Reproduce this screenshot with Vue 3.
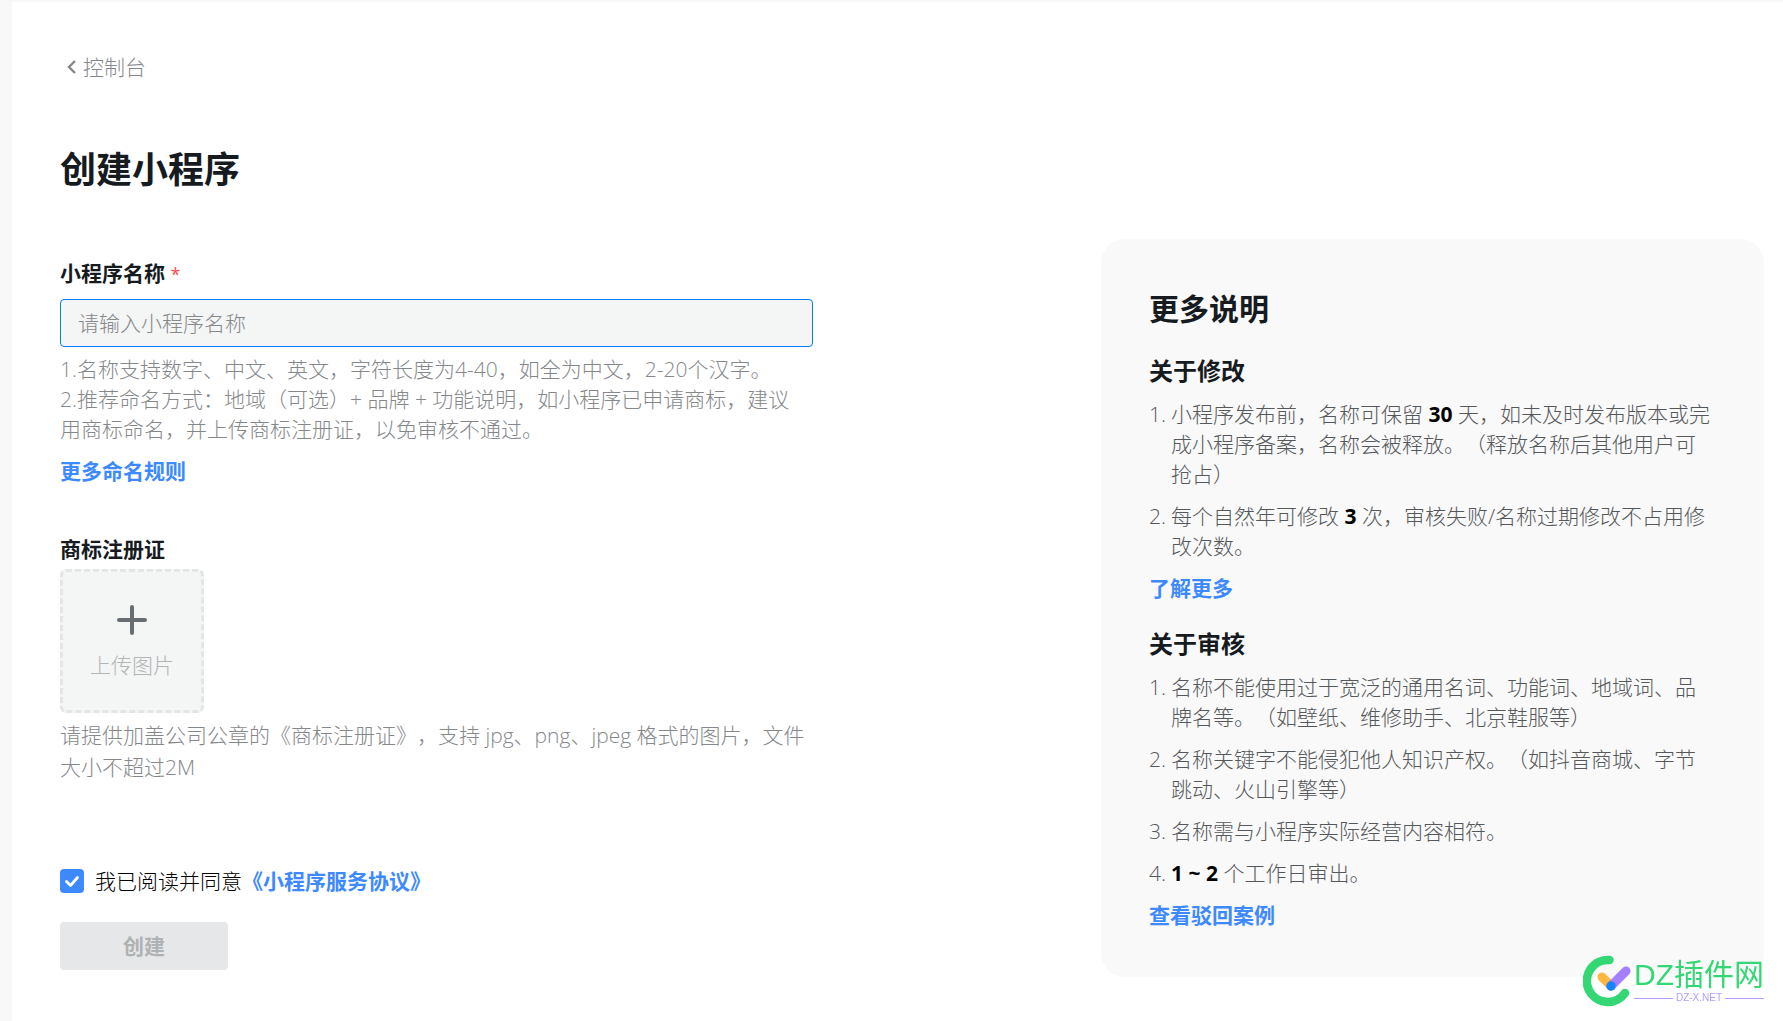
<script setup>
import { ref } from 'vue'

const name = ref('')
const agreed = ref(true)
</script>

<template>
  <div class="shell">
    <main class="page">
      <a class="back" href="#">
        <svg class="back-icon" viewBox="0 0 12 16" aria-hidden="true">
          <path d="M9 2 3 8l6 6" fill="none" stroke="currentColor" stroke-width="2.4" />
        </svg>
        <span>控制台</span>
      </a>
      <h1>创建小程序</h1>

      <div class="columns">
        <form class="form" @submit.prevent>
          <label class="label" for="app-name">小程序名称 <span class="required">*</span></label>
          <input id="app-name" v-model="name" class="text-input" type="text" placeholder="请输入小程序名称" />
          <p class="hint name-hint">
            1.名称支持数字、中文、英文，字符长度为4-40，如全为中文，2-20个汉字。<br />
            2.推荐命名方式：地域（可选）+ 品牌 + 功能说明，如小程序已申请商标，建议用商标命名，并上传商标注册证，以免审核不通过。
          </p>
          <a class="link" href="#">更多命名规则</a>

          <span id="cert-label" class="label cert-label">商标注册证</span>
          <button class="upload" type="button" aria-describedby="cert-label">
            <svg class="plus" viewBox="0 0 30 30" aria-hidden="true">
              <path d="M15 2v26M2 15h26" fill="none" stroke="currentColor" stroke-width="4" stroke-linecap="round" />
            </svg>
            <span>上传图片</span>
          </button>
          <p class="hint cert-hint">请提供加盖公司公章的《商标注册证》，支持 jpg、png、jpeg 格式的图片，文件大小不超过2M</p>

          <div class="agree">
            <input id="agree" v-model="agreed" class="check" type="checkbox" />
            <label for="agree">我已阅读并同意</label>
            <a class="link" href="#">《小程序服务协议》</a>
          </div>
          <button class="submit" type="submit" disabled>创建</button>
        </form>

        <aside class="card">
          <h2>更多说明</h2>
          <h3>关于修改</h3>
          <ol>
            <li><span class="num">1.</span><span>小程序发布前，名称可保留 <b>30</b> 天，如未及时发布版本或完成小程序备案，名称会被释放。（释放名称后其他用户可抢占）</span></li>
            <li><span class="num">2.</span><span>每个自然年可修改 <b>3</b> 次，审核失败/名称过期修改不占用修改次数。</span></li>
          </ol>
          <a class="link" href="#">了解更多</a>
          <h3>关于审核</h3>
          <ol>
            <li><span class="num">1.</span><span>名称不能使用过于宽泛的通用名词、功能词、地域词、品牌名等。（如壁纸、维修助手、北京鞋服等）</span></li>
            <li><span class="num">2.</span><span>名称关键字不能侵犯他人知识产权。（如抖音商城、字节跳动、火山引擎等）</span></li>
            <li><span class="num">3.</span><span>名称需与小程序实际经营内容相符。</span></li>
            <li><span class="num">4.</span><span><b>1 ~ 2</b> 个工作日审出。</span></li>
          </ol>
          <a class="link" href="#">查看驳回案例</a>
        </aside>
      </div>
    </main>

    <div class="watermark">
      <svg class="mark" viewBox="0 0 48 52" aria-hidden="true">
        <path d="M26.5 5A21 21 0 1 0 42 38" fill="none" stroke="#33d774" stroke-width="8.5" stroke-linecap="round" />
        <path d="M19 22l9 9" stroke="#ffb83d" stroke-width="9" stroke-linecap="round" />
        <path d="M43 16 28 31" stroke="#a480ff" stroke-width="9" stroke-linecap="round" />
        <circle cx="28" cy="31" r="4.7" fill="#1485ff" />
      </svg>
      <div class="brand">
        <span class="brand-name">DZ插件网</span>
        <span class="brand-site">DZ-X.NET</span>
      </div>
    </div>
  </div>
</template>

<style>
body {
  margin: 0;
  background: #f8f8f8;
}
</style>

<style scoped>
.shell {
  box-sizing: border-box;
  min-height: 100vh;
  padding: 2px 0 0 12px;
  display: flex;
  font-family: "Open Sans", "Noto Sans CJK SC", sans-serif;
  font-size: 21px;
  font-weight: 300;
  line-height: 30px;
  text-spacing-trim: space-all;
  color: #161b1f;
}

.page {
  flex: 1;
  min-width: 0;
  padding: 50px 19px 44px 48px;
  background: #fff;
}

a {
  text-decoration: none;
}

.back {
  display: inline-flex;
  align-items: center;
  gap: 5px;
  padding-left: 6px;
  color: #85888b;
}

.back-icon {
  width: 12px;
  height: 16px;
}

h1,
h2,
h3,
p,
ol {
  margin: 0;
  padding: 0;
}

h1 {
  margin-top: 60px;
  font-size: 36px;
  line-height: 56px;
}

.columns {
  display: flex;
  justify-content: space-between;
  gap: 48px;
  align-items: flex-start;
  margin-top: 41px;
}

.form {
  flex: 0 1 753px;
  min-width: 0;
  display: flex;
  flex-direction: column;
  align-items: flex-start;
  padding-top: 19px;
}

.label {
  font-weight: 700;
}

.required {
  color: #ff4d4f;
  font-size: 18px;
  font-weight: 400;
  line-height: 18px;
}

.text-input {
  box-sizing: border-box;
  width: 100%;
  height: 48px;
  margin: 11px 0 7px;
  padding: 0 17px;
  border: 1px solid #007bff;
  border-radius: 4px;
  background: #f4f5f5;
  outline: none;
  font: inherit;
  color: #161b1f;
}

.text-input::placeholder {
  color: #85888b;
  opacity: 1;
}

.hint {
  color: #85888b;
}

.name-hint {
  padding-right: 12px;
}

.link {
  color: #3d89ff;
  font-weight: 700;
}

.form > .link {
  margin-top: 12px;
}

.cert-label {
  margin-top: 48px;
}

.upload {
  box-sizing: border-box;
  width: 144px;
  height: 144px;
  margin: 5px 0 6px;
  padding: 2px 0 0;
  display: flex;
  flex-direction: column;
  align-items: center;
  justify-content: center;
  gap: 15px;
  border: 3px dashed #e4e5e5;
  border-radius: 6px;
  background: #f4f5f5;
  font: inherit;
  color: #b2b4b6;
}

.plus {
  width: 30px;
  height: 30px;
  color: #686d72;
}

.cert-hint {
  line-height: 32px;
}

.agree {
  display: flex;
  align-items: center;
  margin-top: 83px;
  color: #000;
}

.check {
  appearance: none;
  width: 24px;
  height: 24px;
  margin: 0 11px 0 0;
  border-radius: 4px;
  background: #3d89ff url("data:image/svg+xml,%3Csvg xmlns='http://www.w3.org/2000/svg' viewBox='0 0 24 24'%3E%3Cpath d='M6.5 12.5l4 4 7-8' fill='none' stroke='white' stroke-width='2.8' stroke-linecap='round' stroke-linejoin='round'/%3E%3C/svg%3E") center / 24px;
}

.submit {
  width: 168px;
  height: 48px;
  margin-top: 26px;
  padding: 0;
  border: 0;
  border-radius: 4px;
  background: #e6e7e9;
  font: inherit;
  font-weight: 700;
  color: #afb2b3;
}

.card {
  box-sizing: border-box;
  flex: 0 1 663px;
  min-width: 0;
  padding: 48px 48px 47px;
  border-radius: 24px;
  background: #f9f9f9;
}

h2 {
  font-size: 30px;
  line-height: 43px;
}

h3 {
  margin: 24px 0 11px;
  font-size: 24px;
  line-height: 34px;
}

ol {
  display: flex;
  flex-direction: column;
  gap: 12px;
  margin-bottom: 12px;
  list-style: none;
  color: #55585b;
}

li {
  display: flex;
}

.num {
  flex: 0 0 22px;
}

b {
  color: #000;
  font-weight: 700;
}

.card .link {
  display: block;
}

.watermark {
  position: fixed;
  right: 19px;
  bottom: 14px;
  display: flex;
  align-items: center;
  gap: 3px;
  font-family: "Liberation Sans", "Noto Sans CJK SC", sans-serif;
  font-weight: 400;
}

.mark {
  width: 48px;
  height: 52px;
}

.brand {
  display: flex;
  flex-direction: column;
}

.brand-name {
  font-size: 30px;
  line-height: 34px;
  color: #33d774;
}

.brand-site {
  display: flex;
  align-items: center;
  gap: 3px;
  font-size: 10px;
  line-height: 12px;
  color: #b49cff;
}

.brand-site::before,
.brand-site::after {
  content: "";
  flex: 1;
  height: 1px;
  background: #b49cff;
}
</style>
